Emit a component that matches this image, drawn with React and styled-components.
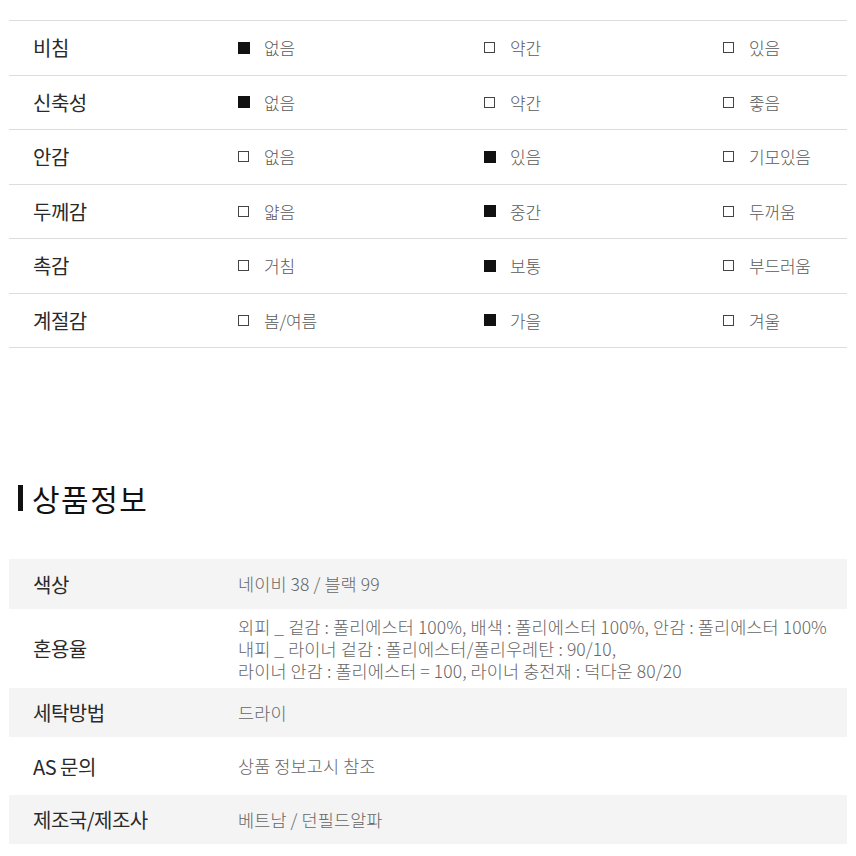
import React from 'react';
import styled, { createGlobalStyle } from 'styled-components';

const GlobalStyle = createGlobalStyle`
  html, body {
    margin: 0;
    padding: 0;
    background: #fff;
  }
  body {
    font-family: "Noto Sans CJK KR", "Noto Sans", sans-serif;
    color: #222;
  }
  *{
    box-sizing: border-box;
  }
`;

const Page = styled.div`
  width: 856px;
  padding: 20px 9px 0;
`;

const FeelTable = styled.div`
  border-top: 1px solid #ddd;
`;

const FeelRow = styled.div`
  display: grid;
  grid-template-columns: 229px 246px 239px 1fr;
  align-items: center;
  height: 54.5px;
  border-bottom: 1px solid #ddd;
`;

const FeelLabel = styled.div`
  padding-left: 24px;
  font-size: 20px;
  font-weight: 400;
  color: #2a2a2a;
  letter-spacing: -0.5px;
`;

const Option = styled.div`
  display: flex;
  align-items: center;
  font-size: 17px;
  font-weight: 300;
  color: #5a5a5a;
  letter-spacing: -0.2px;
`;

const Box = styled.span`
  display: inline-block;
  width: ${props => props.checked ? '12px' : '11px'};
  height: ${props => props.checked ? '12px' : '11px'};
  margin-right: ${props => props.checked ? '14px' : '15px'};
  background: ${props => props.checked ? '#111' : '#fff'};
  border: ${props => props.checked ? 'none' : '1px solid #444'};
`;

const Title = styled.h2`
  display: flex;
  align-items: center;
  margin: 135px 0 0;
  padding-left: 9px;
  font-size: 30px;
  font-weight: 400;
  color: #111;
  height: 30px;
  letter-spacing: 1.5px;

  &::before{
    content: '';
    display: block;
    width: 5px;
    height: 26px;
    background: #111;
    margin-right: 9px;
  }
`;

const InfoTable = styled.div`
  margin-top: 46px;
`;

const InfoRow = styled.div`
  display: grid;
  grid-template-columns: 229px 1fr;
  align-items: center;
  height: ${props => props.h}px;
  background: ${props => props.shaded ? '#f4f4f4' : '#fff'};
`;

const InfoLabel = styled.div`
  padding-left: 24px;
  font-size: 20px;
  font-weight: 400;
  color: #2a2a2a;
  letter-spacing: -0.5px;
`;

const InfoValue = styled.div`
  font-size: 17.5px;
  font-weight: 300;
  line-height: 22px;
  color: #666;
  letter-spacing: 0.1px;
`;

const feel = [
  { label: '비침', options: ['없음', '약간', '있음'], checked: 0 },
  { label: '신축성', options: ['없음', '약간', '좋음'], checked: 0 },
  { label: '안감', options: ['없음', '있음', '기모있음'], checked: 1 },
  { label: '두께감', options: ['얇음', '중간', '두꺼움'], checked: 1 },
  { label: '촉감', options: ['거침', '보통', '부드러움'], checked: 1 },
  { label: '계절감', options: ['봄/여름', '가을', '겨울'], checked: 1 },
];

const info = [
  { label: '색상', value: ['네이비 38 / 블랙 99'], h: 50, shaded: true },
  {
    label: '혼용율',
    value: [
      '외피 _ 겉감 : 폴리에스터 100%, 배색 : 폴리에스터 100%, 안감 : 폴리에스터 100%',
      '내피 _ 라이너 겉감 : 폴리에스터/폴리우레탄 : 90/10,',
      '라이너 안감 : 폴리에스터 = 100, 라이너 충전재 : 덕다운 80/20',
    ],
    h: 79,
  },
  { label: '세탁방법', value: ['드라이'], h: 49, shaded: true },
  { label: 'AS 문의', value: ['상품 정보고시 참조'], h: 58 },
  { label: '제조국/제조사', value: ['베트남 / 던필드알파'], h: 49, shaded: true },
];

export default function App() {
  return (
    <>
      <GlobalStyle />
      <Page>
        <FeelTable>
          {feel.map(row => (
            <FeelRow key={row.label}>
              <FeelLabel>{row.label}</FeelLabel>
              {row.options.map((opt, i) => (
                <Option key={opt}>
                  <Box checked={i === row.checked} />
                  {opt}
                </Option>
              ))}
            </FeelRow>
          ))}
        </FeelTable>

        <Title>상품정보</Title>

        <InfoTable>
          {info.map(row => (
            <InfoRow key={row.label} h={row.h} shaded={row.shaded}>
              <InfoLabel>{row.label}</InfoLabel>
              <InfoValue>
                {row.value.map(line => <div key={line}>{line}</div>)}
              </InfoValue>
            </InfoRow>
          ))}
        </InfoTable>
      </Page>
    </>
  );
}
